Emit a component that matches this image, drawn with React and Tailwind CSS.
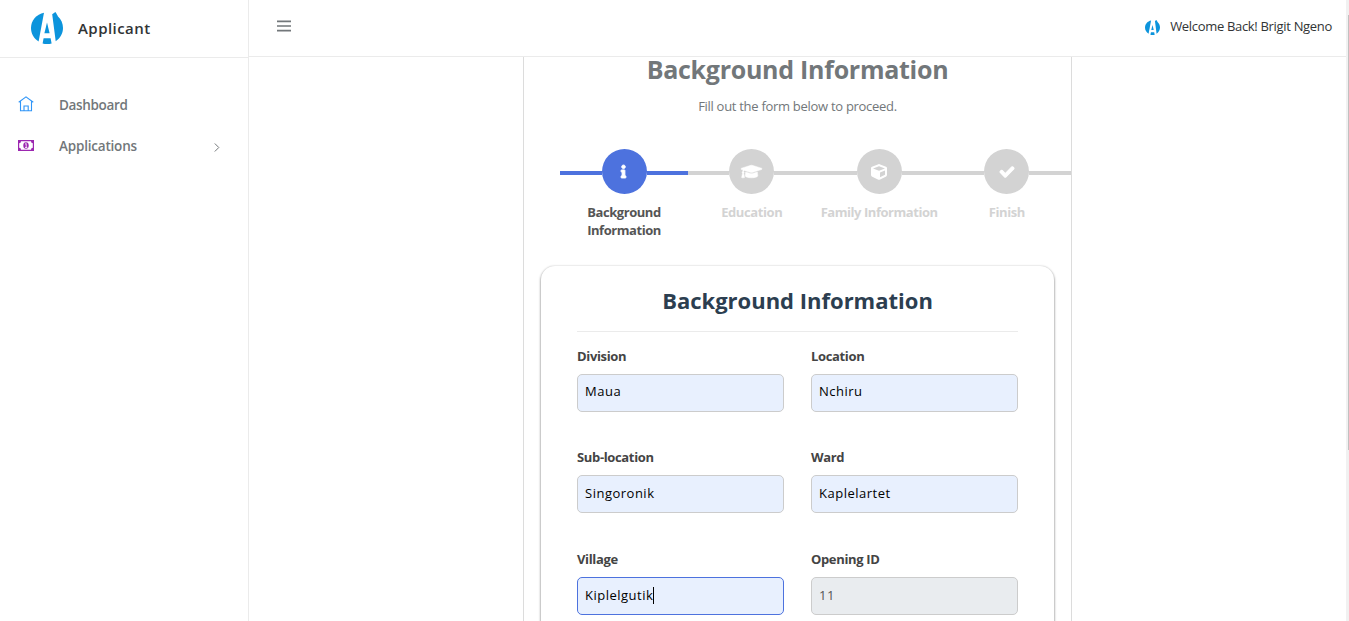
import { FaInfo, FaGraduationCap, FaCube, FaCheck } from "react-icons/fa";

function Logo({ className }) {
  return (
    <svg className={className} viewBox="0 0 32 32" fill="#0c94dc">
      <path d="M13 0.8C5.5 2.2 0 8.500 0 16c0 5.500 2.900 10.600 7.600 13.400z" />
      <path d="M21.200 2.200L24.400 0c1.300 2 2 3 2.400 4.200C30.200 7.200 32 11.500 32 16c0 5.400-2.800 10.400-7.300 13.300z" />
      <path d="M16 10.500l2.600 10.800h-5.200z" />
      <path d="M12.600 26.200h7l1 5.200c-2.800 1.100-6.200 1.100-9 0z" />
    </svg>
  );
}

function HomeIcon() {
  return (
    <svg className="mb-[2px] h-4 w-4" viewBox="0 0 16 16" fill="none" stroke="#2f95f8" strokeWidth="1.1">
      <path d="M0.700 6.200L8 0.900l7.300 5.300M2.500 5.500v9.200h11V5.500M6 14.500v-4.500h4.200v4.500" />
    </svg>
  );
}

function MoneyIcon() {
  return (
    <svg className="h-[11px] w-4" viewBox="0 0 16 11">
      <rect width="16" height="11" fill="#9c27b0" />
      <path d="M3 1.200h10a2 2 0 0 0 1.800 2v4.600a2 2 0 0 0-1.800 2H3a2 2 0 0 0-1.800-2V3.200A2 2 0 0 0 3 1.200z" fill="#fff" />
      <ellipse cx="8" cy="5.500" rx="2.700" ry="3.300" fill="#9c27b0" />
      <path d="M7 4.200l1.200-.7v4M7 7.500h2.300" fill="none" stroke="#fff" strokeWidth=".8" />
    </svg>
  );
}

const steps = [
  { label: "Background Information", Icon: FaInfo, active: true, tracking: "tracking-[-0.45px]", size: "mb-px mr-px h-[13px] w-[13px]", stroke: 34 },
  { label: "Education", Icon: FaGraduationCap, tracking: "tracking-[-0.4px]", size: "h-[17px] w-[21px]", stroke: 14 },
  { label: "Family Information", Icon: FaCube, tracking: "tracking-[-0.45px]", size: "h-4 w-4", stroke: 0 },
  { label: "Finish", Icon: FaCheck, tracking: "tracking-[-0.4px]", size: "h-[14px] w-[14px]", stroke: 40 },
];

const fields = [
  { label: "Division", value: "Maua", look: "border-[#ccc] bg-[#e8f0fe] pb-[2px] text-black" },
  { label: "Location", value: "Nchiru", look: "border-[#ccc] bg-[#e8f0fe] pb-[2px] text-black" },
  { label: "Sub-location", value: "Singoronik", look: "border-[#ccc] bg-[#e8f0fe] pb-[2px] text-black" },
  { label: "Ward", value: "Kaplelartet", look: "border-[#ccc] bg-[#e8f0fe] pb-[2px] text-black" },
  { label: "Village", value: "Kiplelgutik", look: "border-[#4d72de] bg-[#e8f0fe] text-black", caret: true },
  { label: "Opening ID", value: "11", look: "border-[#ccc] bg-[#e9ecef] text-[#555]" },
];

function Sidebar() {
  return (
    <aside className="w-[249px] shrink-0 border-r border-[#ebebeb]">
      <div className="flex h-[58px] items-center border-b border-[#ebebeb] pb-px pl-[31px]">
        <Logo className="h-8 w-8" />
        <span className="ml-[15px] text-[15px] font-semibold tracking-[0.45px] text-[#313435]">Applicant</span>
      </div>
      <nav className="pt-[26px] text-[13.500px] font-semibold text-[#72777a]">
        <a className="flex h-[41px] items-center pl-[18px]">
          <HomeIcon />
          <span className="mt-[2px] ml-[25px] tracking-[-0.35px]">Dashboard</span>
        </a>
        <a className="flex h-[41px] items-center pr-[28px] pl-[18px]">
          <MoneyIcon />
          <span className="mt-[2px] ml-[25px] tracking-[-0.2px]">Applications</span>
          <svg className="mt-[3px] ml-auto h-[9px] w-[6px]" viewBox="0 0 6 9" fill="none" stroke="#72777a">
            <path d="M0.800 0.500l4 4-4 4" />
          </svg>
        </a>
      </nav>
    </aside>
  );
}

function Header() {
  return (
    <header className="flex h-[57px] shrink-0 items-center justify-between border-b border-[#ebebeb] pr-[14px] pl-[28px]">
      <svg className="mb-[4px] h-[12px] w-[14px]" viewBox="0 0 14 12" fill="#72777a">
        <path d="M0 0.500h14v1.700H0zM0 5.150h14v1.700H0zM0 9.800h14v1.700H0z" />
      </svg>
      <div className="flex items-center pb-[3px]">
        <Logo className="mt-[2px] h-[15px] w-[15px]" />
        <span className="ml-[10px] text-[13px] tracking-[-0.32px] text-[#313435]">Welcome Back! Brigit Ngeno</span>
      </div>
    </header>
  );
}

function Steps() {
  return (
    <div className="ml-9 grid grid-cols-[128px_127.500px_127.300px_1fr]">
      {steps.map(({ label, Icon, active, tracking, size, stroke }) => (
        <div key={label} className="flex flex-col items-center">
          <div className="flex w-full items-center">
            <div className={`mt-[3px] h-1 flex-1 ${active ? "bg-[#4d72de]" : "bg-[#d3d3d3]"}`} />
            <div className={`flex h-[45px] w-[45px] items-center justify-center rounded-full text-white ${active ? "bg-[#4d72de]" : "bg-[#d3d3d3]"}`}>
              <Icon className={`overflow-visible ${size}`} strokeWidth={stroke} />
            </div>
            <div className={`mt-[3px] h-1 flex-1 ${active ? "bg-[#4d72de]" : "bg-[#d3d3d3]"}`} />
          </div>
          <div className={`mt-[9px] text-center text-[13px] leading-[18px] font-bold ${tracking} ${active ? "px-4 text-[#555]" : "text-[#d3d3d3]"}`}>
            {label}
          </div>
        </div>
      ))}
    </div>
  );
}

function Field({ label, value, look, caret }) {
  return (
    <label className="block h-[101.400px]">
      <span className="block h-[28px] text-[13px] leading-[20px] font-bold tracking-[-0.35px] text-[#444]">{label}</span>
      <span className={`flex h-[38px] items-center rounded-[5px] border pl-[7px] text-[13px] tracking-[0.5px] ${look}`}>
        {value}
        {caret && <span className="mb-px h-[17px] w-px bg-black" />}
      </span>
    </label>
  );
}

export default function App() {
  return (
    <div className="flex h-[621px] w-full overflow-hidden bg-white font-['Open_Sans','Noto_Sans',sans-serif]">
      <Sidebar />
      <div className="flex min-w-0 flex-1 flex-col">
        <Header />
        <main className="flex min-h-0 flex-1 flex-col overflow-hidden pl-[274px]">
          <section className="h-[900px] w-[549px] shrink-0 border-x border-[#dcdcdc]">
            <h1 className="h-[30px] text-center text-[25px] leading-[24px] font-bold tracking-[-0.27px] text-[#72777a]">Background Information</h1>
            <p className="mt-[9px] mb-[33px] text-center text-[13px] leading-[20px] tracking-[-0.29px] text-[#72777a]">Fill out the form below to proceed.</p>
            <Steps />
            <div className="mt-[27px] ml-[17px] h-[500px] w-[513px] rounded-[14px] px-9 pt-[19px] pb-9 shadow-[0_1px_2px_1px_rgba(0,0,0,0.28)]">
              <h2 className="h-[47px] border-b border-[#ebebeb] text-center text-[22px] leading-[30px] font-bold text-[#2c3e50]">Background Information</h2>
              <div className="mt-[14px] grid grid-cols-2 gap-x-[27px]">
                {fields.map((f) => (
                  <Field key={f.label} {...f} />
                ))}
              </div>
            </div>
          </section>
        </main>
      </div>
      <div className="flex w-[3px] shrink-0 flex-col items-end bg-[#f1f1f1]">
        <div className="mt-[15px] h-[435px] w-px bg-[#c1c1c1]" />
      </div>
    </div>
  );
}
